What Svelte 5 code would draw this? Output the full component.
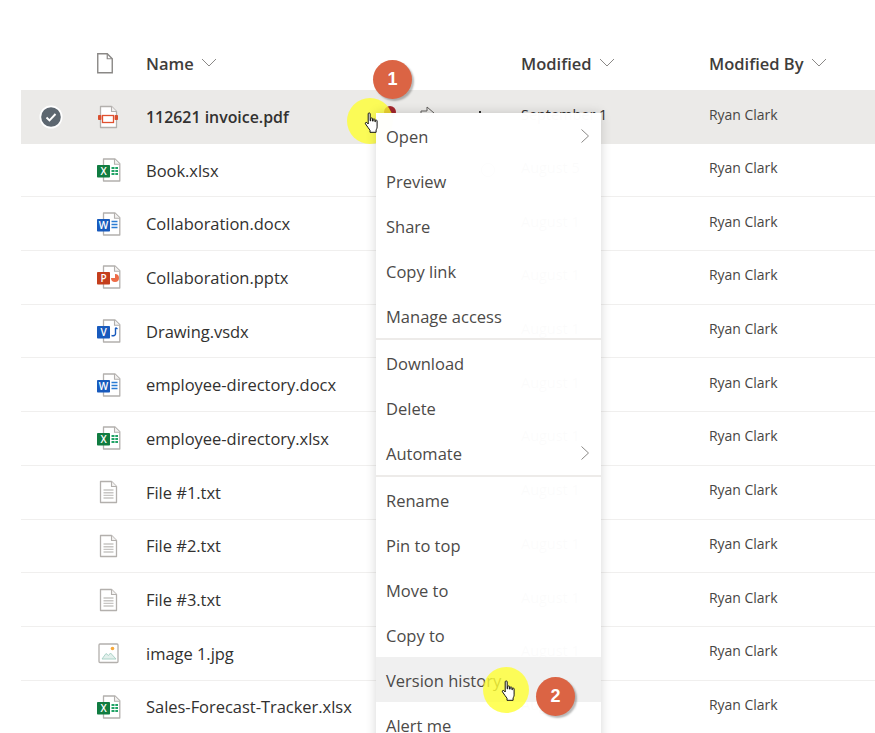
<script lang="ts">
	type Kind = 'pdf' | 'xlsx' | 'docx' | 'pptx' | 'vsdx' | 'txt' | 'jpg';
	const files: { name: string; kind: Kind; date: string }[] = [
		{ name: '112621 invoice.pdf', kind: 'pdf', date: 'September 1' },
		{ name: 'Book.xlsx', kind: 'xlsx', date: 'August 5' },
		{ name: 'Collaboration.docx', kind: 'docx', date: 'August 1' },
		{ name: 'Collaboration.pptx', kind: 'pptx', date: 'August 1' },
		{ name: 'Drawing.vsdx', kind: 'vsdx', date: 'August 1' },
		{ name: 'employee-directory.docx', kind: 'docx', date: 'August 1' },
		{ name: 'employee-directory.xlsx', kind: 'xlsx', date: 'August 1' },
		{ name: 'File #1.txt', kind: 'txt', date: 'August 1' },
		{ name: 'File #2.txt', kind: 'txt', date: 'August 1' },
		{ name: 'File #3.txt', kind: 'txt', date: 'August 1' },
		{ name: 'image 1.jpg', kind: 'jpg', date: 'August 1' },
		{ name: 'Sales-Forecast-Tracker.xlsx', kind: 'xlsx', date: 'August 1' }
	];
	const menu = [
		[{ t: 'Open', sub: true }, { t: 'Preview' }, { t: 'Share' }, { t: 'Copy link' }, { t: 'Manage access' }],
		[{ t: 'Download' }, { t: 'Delete' }, { t: 'Automate', sub: true }],
		[{ t: 'Rename' }, { t: 'Pin to top' }, { t: 'Move to' }, { t: 'Copy to' }, { t: 'Version history', hover: true }, { t: 'Alert me' }]
	];
	const badges: Record<string, { c: string; l: string }> = {
		xlsx: { c: '#107c41', l: 'X' },
		docx: { c: '#185abd', l: 'W' },
		pptx: { c: '#c43e1c', l: 'P' },
		vsdx: { c: '#185abd', l: 'V' }
	};
</script>

{#snippet chevron()}
	<svg class="chev" viewBox="0 0 16 9" width="16" height="9" aria-hidden="true">
		<path d="M1 1l7 7 7-7" fill="none" stroke="#8a8886" stroke-width="1" />
	</svg>
{/snippet}

{#snippet hand()}
	<svg viewBox="0 0 18 22" width="18" height="22" aria-hidden="true">
		<path
			d="M5.2 1.8c0-1.2 2-1.2 2 0v7l.5.1V6.7c0-1 1.9-1 1.9 0v2.4l.5.1V7.6c0-1 1.8-1 1.8 0v2l.5.1V8.8c0-.9 1.7-.9 1.7 0v6.1c0 1.600-.6 2.200-1 3.100v2.300H7v-2.100c-1-1.300-2.500-3.300-4.500-6.300-.7-1.100.6-2 1.500-1.200l1.200 1.300z"
			fill="#fff"
			stroke="#111"
			stroke-width="1"
			stroke-linejoin="round"
		/>
	</svg>
{/snippet}

{#snippet fileIcon(kind: Kind)}
	<svg viewBox="0 0 24 24" width="24" height="24" aria-hidden="true">
		{#if kind === 'jpg'}
			<rect x="2" y="3" width="19" height="18.500" rx="1" fill="#fff" stroke="#b3b0ad" stroke-width="1.300" />
			<path d="M5 18l4-5.500 2.500 2 2-2.500 5.500 6z" fill="#e3f0ec" stroke="#a5cfc4" stroke-width=".9" />
			<circle cx="15.500" cy="7.500" r="1.800" fill="#f7a93b" />
		{:else if kind === 'txt' || kind === 'pdf'}
			<path d="M3.500 1.500h11l5 5v16h-16z" fill="#fff" stroke="#b3b0ad" stroke-width="1.300" stroke-linejoin="round" />
			<path d="M14.500 1.500v5h5" fill="#f3f2f1" stroke="#b3b0ad" stroke-width="1.100" />
			{#if kind === 'txt'}
				<path d="M6.500 10h10M6.500 12.700h10M6.500 15.400h10M6.500 18h10" stroke="#c8c6c4" stroke-width="1.400" />
			{:else}
				<rect x="5.500" y="10.500" width="11" height="7" fill="#fff" stroke="#e0502f" stroke-width="1.300" />
				<rect x="1" y="10" width="3.400" height="5" rx=".8" fill="#d9502f" />
				<rect x="17.600" y="10" width="3.400" height="5" rx=".8" fill="#d9502f" />
			{/if}
		{:else}
			<path d="M6.500 1h11.500l4.800 4.800V23H6.500z" fill="#fff" stroke="#b3b0ad" stroke-width="1.300" stroke-linejoin="round" />
			<path d="M17.500 1v5.300h5.300" fill="#f3f2f1" stroke="#b3b0ad" stroke-width="1.100" />
			{#if kind === 'xlsx'}
				<path d="M14.500 9h3v2h-3zM18.300 9h2.700v2h-2.700zM14.500 12h3v2h-3zM18.300 12h2.700v2h-2.700zM14.500 15h3v2h-3zM18.300 15h2.700v2h-2.700z" fill="#21a366" />
			{:else if kind === 'docx'}
				<path d="M14.500 9.500h6M14.500 12.500h6M14.500 15.500h6" stroke="#2b7cd3" stroke-width="1.400" />
			{:else if kind === 'pptx'}
				<path d="M18 9a4 4 0 1 1-4 4h4z" fill="#ed6c47" />
			{:else}
				<path d="M18.500 9v6c0 1.500-2 2-4 1.500M18.500 8.500l2 1.500" fill="none" stroke="#185abd" stroke-width="1.400" />
			{/if}
			<rect x="0" y="7" width="13" height="12.500" rx=".8" fill={badges[kind].c} />
			<text x="6.500" y="16.800" class="badge">{badges[kind].l}</text>
		{/if}
	</svg>
{/snippet}

<div class="page">
	<div class="row head">
		<div class="tick"></div>
		<div class="ico">
			<svg viewBox="0 0 20 22" width="20" height="22" aria-hidden="true">
				<path d="M1.750 1.750h9.500l5 5V20.750H1.750z" fill="#fff" stroke="#8a8886" stroke-width="1.400" />
				<path d="M11.250 1.750v5h5" fill="none" stroke="#8a8886" stroke-width="1.200" />
			</svg>
		</div>
		<div class="cell">Name {@render chevron()}</div>
		<div class="cell">Modified {@render chevron()}</div>
		<div class="cell">Modified By {@render chevron()}</div>
	</div>

	{#each files as f, i}
		<div class="row item" class:selected={i === 0}>
			<div class="tick">
				{#if i === 0}
					<svg viewBox="0 0 24 24" width="24" height="24" aria-hidden="true">
						<circle cx="12" cy="12" r="11.500" fill="#fff" />
						<circle cx="12" cy="12" r="9.800" fill="#5d6770" />
						<path d="M7.500 12.500l3 3 6-6.500" fill="none" stroke="#fff" stroke-width="1.900" />
					</svg>
				{/if}
			</div>
			<div class="ico">{@render fileIcon(f.kind)}</div>
			<div class="name">
				{f.name}
				{#if i === 0}
					<span class="actions">
						<span class="dot"></span>
						<svg viewBox="0 0 20 20" width="20" height="20" aria-hidden="true">
							<path d="M3 15V9h6V5l7 6-7 6v-4" fill="none" stroke="#605e5c" />
						</svg>
						<span class="more"></span>
					</span>
				{:else if i === 1}
					<span class="status"></span>
				{/if}
			</div>
			<div class="date">{f.date}</div>
			<div class="by">Ryan Clark</div>
		</div>
	{/each}

	<div class="spot one"></div>

	<div class="menu">
		{#each menu as group, g}
			{#if g > 0}<div class="sep"></div>{/if}
			{#each group as m}
				<div class="mi" class:hover={m.hover}>
					{m.t}
					{#if m.sub}
						<svg viewBox="0 0 8 14" width="8" height="14" aria-hidden="true">
							<path d="M.5.500l7 6.500-7 6.500" fill="none" stroke="#8a8886" />
						</svg>
					{/if}
				</div>
			{/each}
		{/each}
	</div>

	<span class="cur c1">{@render hand()}</span>
	<div class="num n1">1</div>
	<div class="spot two"></div>
	<span class="cur c2">{@render hand()}</span>
	<div class="num n2">2</div>
</div>

<style>
	:global(body) {
		margin: 0;
		background: #fff;
	}
	.page {
		position: relative;
		height: 733px;
		overflow: hidden;
		padding: 36px 0 0 21px;
		box-sizing: border-box;
		font-family: 'Open Sans', 'Liberation Sans', sans-serif;
		color: #323130;
	}
	.row {
		display: grid;
		grid-template-columns: 60px 65px 375px 188px 1fr;
		align-items: center;
	}
	.head {
		height: 54px;
		font-size: 16.500px;
		font-weight: 600;
		color: #3f3d3b;
	}
	.head .cell {
		display: flex;
		align-items: center;
		gap: 7px;
	}
	.chev {
		margin-top: -2px;
	}
	.item {
		height: 53.700px;
		box-sizing: border-box;
		border-bottom: 1px solid #f0efee;
		font-size: 16.500px;
		letter-spacing: -0.03px;
	}
	.selected {
		background: #ebeae8;
		border-bottom: none;
	}
	.selected .name {
		font-size: 15.900px;
		font-weight: 600;
		letter-spacing: 0;
	}
	.tick {
		display: flex;
		justify-content: flex-end;
		height: 24px;
		width: 42px;
	}
	.ico {
		display: flex;
		height: 24px;
		margin-left: 16px;
	}
	.head .ico {
		height: 22px;
		margin-left: 15px;
	}
	.name {
		position: relative;
		white-space: nowrap;
	}
	.actions {
		position: absolute;
		left: 238px;
		top: -4px;
		display: flex;
		align-items: center;
		gap: 22px;
	}
	.dot {
		width: 12px;
		height: 12px;
		border-radius: 50%;
		background: #a4262c;
	}
	.more {
		width: 2px;
		height: 2px;
		margin-left: 19px;
		background: #323130;
	}
	.status {
		position: absolute;
		left: 335px;
		top: 4px;
		width: 12px;
		height: 12px;
		border-radius: 50%;
		border: 1px solid #605e5c;
	}
	.date,
	.by {
		padding-bottom: 5px;
	}
	.date {
		font-size: 14.500px;
		color: #323130;
	}
	.by {
		font-size: 14px;
		color: #484644;
	}
	.badge {
		font: 600 10px 'Open Sans', sans-serif;
		fill: #fff;
		text-anchor: middle;
	}
	.menu {
		position: absolute;
		left: 376px;
		top: 113px;
		width: 225px;
		background: rgba(255, 255, 255, 0.985);
		box-shadow: 0 0 10px rgba(0, 0, 0, 0.16);
		font-size: 16.500px;
		color: #4c4a48;
	}
	.mi {
		height: 45px;
		display: flex;
		align-items: center;
		justify-content: space-between;
		padding: 1px 12px 0 10px;
		box-sizing: border-box;
	}
	.mi.hover {
		background: #f0f0f0;
	}
	.sep {
		height: 2px;
		background: #edebe9;
	}
	.spot {
		position: absolute;
		width: 46px;
		height: 46px;
		border-radius: 50%;
		background: rgba(255, 255, 50, 0.8);
	}
	.one {
		left: 347px;
		top: 98px;
	}
	.two {
		left: 483px;
		top: 667px;
	}
	.cur {
		position: absolute;
		line-height: 0;
	}
	.c1 {
		left: 363px;
		top: 112px;
	}
	.c2 {
		left: 500px;
		top: 680px;
	}
	.num {
		position: absolute;
		width: 39px;
		height: 39px;
		border-radius: 50%;
		background: #db6444;
		box-shadow: 2px 2px 2px rgba(0, 0, 0, 0.28);
		color: #fff;
		font: 700 18px/39px 'Liberation Sans', sans-serif;
		text-align: center;
	}
	.n1 {
		left: 373px;
		top: 60px;
	}
	.n2 {
		left: 536px;
		top: 677px;
	}
</style>
